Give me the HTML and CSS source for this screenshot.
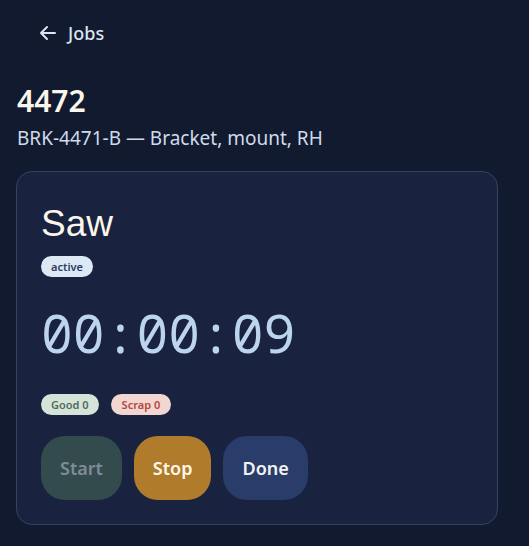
FILE: index.html
```html
<!DOCTYPE html>
<html>
<head>
<meta charset="utf-8">
<link rel="stylesheet" href="styles.css">
</head>
<body>
	<div class="page">
		<a class="back" href="#">
			<svg width="20" height="20" viewBox="0 0 20 20" fill="none" stroke="currentColor" stroke-width="2" stroke-linecap="round" stroke-linejoin="round">
				<path d="M17 10H3M9 4l-6 6 6 6"/>
			</svg>
			<span>Jobs</span>
		</a>

		<h1 class="job-no">4472</h1>
		<p class="job-part">BRK-4471-B — Bracket, mount, RH</p>

		<div class="op-card">
			<h2 class="op-name">Saw</h2>
			<div class="chips">
				<span class="chip chip-active">active</span>
			</div>
			<div class="timer">00:00:09</div>
			<div class="chips">
				<span class="chip chip-good">Good 0</span>
				<span class="chip chip-scrap">Scrap 0</span>
			</div>
			<div class="actions">
				<button class="btn btn-start" disabled>Start</button>
				<button class="btn btn-stop">Stop</button>
				<button class="btn btn-done">Done</button>
			</div>
		</div>
	</div>
</body>
</html>
```

FILE: styles.css
```css
html, body {
	margin: 0;
	height: 100%;
	background: #121a2f;
	font-family: "Noto Sans", sans-serif;
	color: #dbe4f0;
}

.page {
	padding: 20px 31px 0 16px;
}

a.back {
	display: flex;
	align-items: center;
	gap: 10px;
	margin-left: 22px;
	color: #dbe4f0;
	text-decoration: none;
	font-size: 18px;
	font-weight: 500;
	height: 26px;
}

h1.job-no {
	margin: 37px 0 0 1px;
	font-size: 30px;
	font-weight: 600;
	color: #fbf6ea;
	line-height: 36px;
}

p.job-part {
	margin: 6px 0 0 1px;
	font-size: 19px;
	line-height: 26px;
	color: #cfdbea;
}

div.op-card {
	margin-top: 20px;
	background: #19233f;
	border: 1px solid #34425f;
	border-radius: 16px;
	padding: 32px 24px 24px 24px;
}

h2.op-name {
	margin: 0;
	font-family: "Liberation Sans", sans-serif;
	font-weight: 400;
	font-size: 37px;
	line-height: 40px;
	color: #fbf6ea;
}

.chips {
	display: flex;
	gap: 12px;
}

.chip {
	font-size: 11px;
	font-weight: 600;
	padding: 0 10px;
	height: 21px;
	line-height: 21px;
	border-radius: 11px;
}

.chip-active {
	margin-top: 12px;
	background: #dde8f5;
	color: #2c3d63;
}

.chip-good {
	background: #d6e3d9;
	color: #4c6e58;
}

.chip-scrap {
	padding: 0 11px;
	background: #f2d6d1;
	color: #b3483d;
}

div.timer {
	margin: 28px 0 33px 0;
	font-family: "Noto Sans Mono", "DejaVu Sans Mono", monospace;
	font-size: 53px;
	line-height: 56px;
	color: #bcd4ee;
}

.actions {
	display: flex;
	gap: 12px;
	margin-top: 21px;
}

button.btn {
	border: none;
	border-radius: 24px;
	height: 64px;
	padding: 0 19px;
	font-family: inherit;
	font-size: 18px;
	font-weight: 600;
	cursor: pointer;
}

.btn-start {
	background: #344b4d;
	color: #7f8b96;
}

.btn-stop {
	background: #b07c2c;
	color: #fff8ea;
}

.btn-done {
	background: #2a3c6a;
	color: #f2f2f2;
}
```
